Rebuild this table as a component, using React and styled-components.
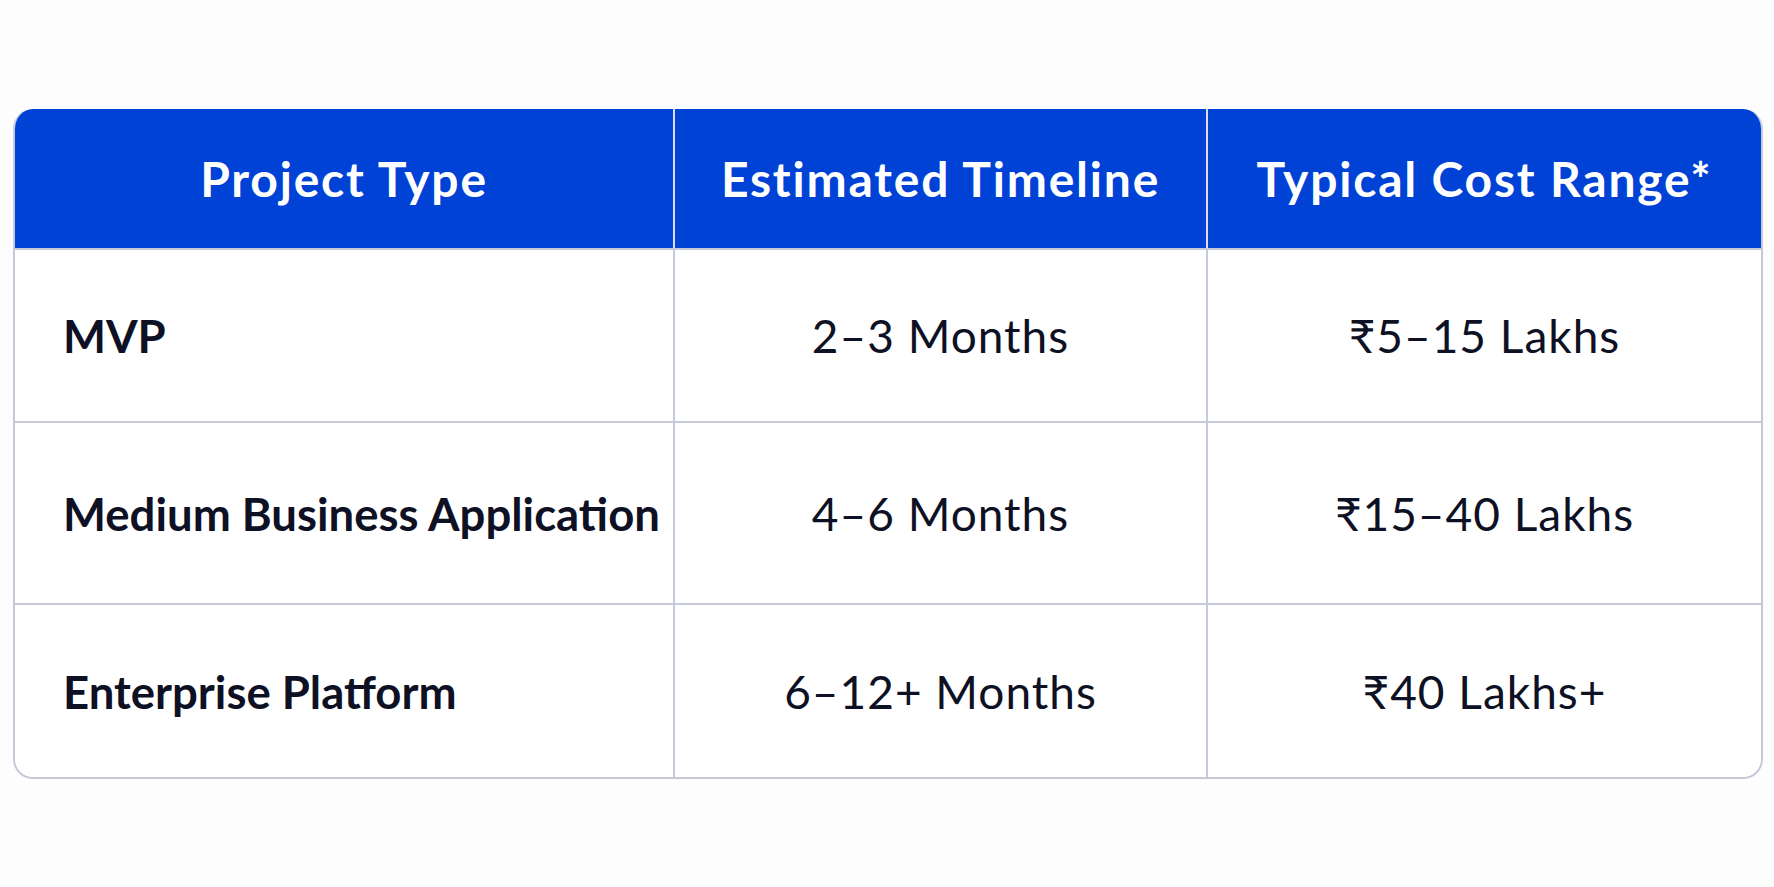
import React from "react";
import styled, { createGlobalStyle } from "styled-components";

const Global = createGlobalStyle`
  html, body { margin: 0; padding: 0; background: #fdfdfe; }
  body { font-family: Lato, "Open Sans", sans-serif; }
`;

const Page = styled.div`
  width: 1774px;
  height: 887px;
  box-sizing: border-box;
  padding: 109px 11px 0 13px;
  background: #fdfdfe;
`;

const Table = styled.div`
  display: grid;
  grid-template-columns: 658px 533px 1fr;
  grid-template-rows: 139px 173px 182px 174px;
  border: 2px solid #c6c9d8;
  border-top: none;
  border-radius: 20px;
  overflow: hidden;
  background: #ffffff;
`;

const HeadCell = styled.div`
  display: flex;
  align-items: center;
  justify-content: center;
  background: #0041d6;
  color: #ffffff;
  font-weight: 700;
  font-size: 48px;
  letter-spacing: 1.8px;
  border-left: ${(p) => (p.$first ? "none" : "2px solid #d9def3")};
`;

const Cell = styled.div`
  display: flex;
  align-items: center;
  justify-content: ${(p) => (p.$label ? "flex-start" : "center")};
  padding-left: ${(p) => (p.$label ? "48px" : "0")};
  color: #0e1124;
  font-size: ${(p) => (p.$label ? "45.5px" : "46px")};
  font-weight: ${(p) => (p.$label ? 700 : 400)};
  letter-spacing: ${(p) => (p.$label ? "0px" : "1px")};
  border-top: 2px solid #c6c9d8;
  border-left: ${(p) => (p.$label ? "none" : "2px solid #c6c9d8")};
  white-space: nowrap;
`;

const headers = ["Project Type", "Estimated Timeline", "Typical Cost Range*"];
const rows = [
  ["MVP", "2–3 Months", "₹5–15 Lakhs"],
  ["Medium Business Application", "4–6 Months", "₹15–40 Lakhs"],
  ["Enterprise Platform", "6–12+ Months", "₹40 Lakhs+"],
];

export default function App() {
  return (
    <Page>
      <Global />
      <Table>
        {headers.map((h, i) => (
          <HeadCell key={h} $first={i === 0}>
            {h}
          </HeadCell>
        ))}
        {rows.map((r) =>
          r.map((c, i) => (
            <Cell key={c} $label={i === 0}>
              {c}
            </Cell>
          ))
        )}
      </Table>
    </Page>
  );
}
